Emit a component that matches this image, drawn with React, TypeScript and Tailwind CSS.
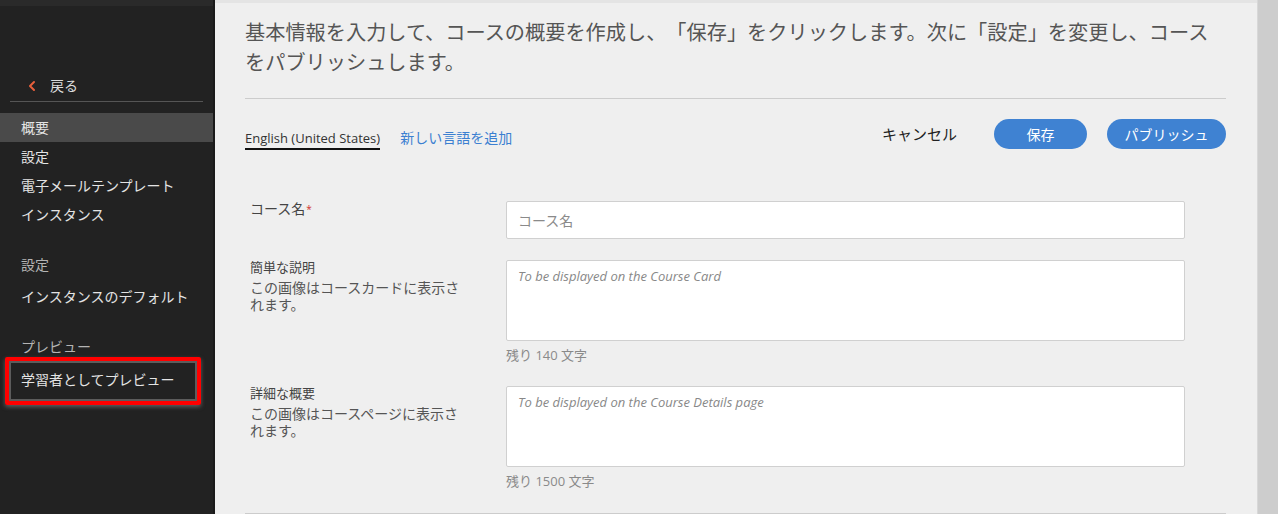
import { ChevronLeft } from "lucide-react"

const font = { fontFamily: "'Open Sans','Noto Sans CJK JP',sans-serif" }

const navItems = ["概要", "設定", "電子メールテンプレート", "インスタンス"]

function Sidebar() {
  return (
    <aside className="w-[215px] shrink-0 bg-[#222222] border-r-2 border-[#1a1a1a] flex flex-col">
      <div className="h-[6px] bg-[#2a2a2a]" />
      <div className="mx-[10px] mt-[66px] flex items-center h-[30px] border-b border-[#555555] pb-[2px]">
        <ChevronLeft className="ml-[14px] h-[16px] w-[16px] text-[#e8603c]" strokeWidth={3} />
        <span className="ml-[10px] text-[14px] text-[#dddddd]">戻る</span>
      </div>
      <div className="mt-[11px] flex flex-col">
        {navItems.map((item, i) => (
          <div
            key={item}
            className={`h-[29px] flex items-center pl-[21px] text-[14px] text-[#e4e4e4] ${i === 0 ? "bg-[#4a4a4a]" : ""}`}
          >
            {item}
          </div>
        ))}
      </div>
      <div className="mt-[21px] h-[29px] flex items-center pl-[21px] text-[14px] text-[#b4b4b4]">設定</div>
      <div className="mt-[3px] h-[29px] flex items-center pl-[21px] text-[14px] text-[#e4e4e4]">インスタンスのデフォルト</div>
      <div className="mt-[21px] h-[29px] flex items-center pl-[21px] text-[14px] text-[#b4b4b4]">プレビュー</div>
      <div className="relative mt-[4px] h-[29px] flex items-center pl-[21px] text-[14px] text-[#e4e4e4]">
        学習者としてプレビュー
        <div className="absolute left-[5px] top-[-8px] w-[196px] h-[48px] border-4 border-[#ff0000] rounded-[2px] shadow-[0_2px_4px_rgba(120,120,120,0.7)]">
          <div className="h-full w-full border-2 border-[#5c5c5c]" />
        </div>
      </div>
    </aside>
  )
}

function Field({
  label,
  required,
  hint,
  placeholder,
  counter,
  multiline,
}: {
  label: string
  required?: boolean
  hint?: string
  placeholder: string
  counter?: string
  multiline?: boolean
}) {
  return (
    <div className="flex">
      <div className="w-[261px] shrink-0 pl-[5px] pr-[41px]">
        {multiline ? (
          <>
            <div className="text-[13px] leading-[18px] text-[#444444] mt-[-2px]">{label}</div>
            <div className="text-[14px] leading-[17px] text-[#555555] mt-[3px]">{hint}</div>
          </>
        ) : (
          <div className="text-[14px] leading-[18px] text-[#444444] mt-[-1px]">
            {label}
            {required && <span className="text-[#d0312d] text-[10px] align-top ml-[1px]">*</span>}
          </div>
        )}
      </div>
      <div className="w-[679px]">
        {multiline ? (
          <div className="h-[81px] bg-white border border-[#d0d0d0] rounded-[2px] px-[11px] pt-[6px] text-[13px] italic text-[#888888]">
            {placeholder}
          </div>
        ) : (
          <div className="h-[38px] bg-white border border-[#d0d0d0] rounded-[2px] px-[11px] flex items-center text-[14px] text-[#8a8a8a]">
            {placeholder}
          </div>
        )}
        {counter && <div className="mt-[6px] text-[13px] leading-[17px] text-[#8a8a8a]">{counter}</div>}
      </div>
    </div>
  )
}

export default function App() {
  return (
    <div className="flex h-[514px] w-[1278px] overflow-hidden [text-spacing-trim:space-all]" style={font}>
      <Sidebar />
      <main className="flex-1 bg-[#efefef] flex flex-col">
        <div className="h-[3px] bg-[#e4e4e4]" />
        <div className="pl-[30px] pr-[31px]">
          <p className="mt-[14px] text-[20.2px] leading-[30px] text-[#555555]">
            基本情報を入力して、コースの概要を作成し、「保存」をクリックします。次に「設定」を変更し、コースをパブリッシュします。
          </p>
          <div className="mt-[21px] border-t border-[#cccccc]" />
          <div className="mt-[20px] flex items-center h-[30px]">
            <div className="h-[30px] flex items-end pb-[2px]">
              <div className="relative text-[13px] leading-[18px] text-[#333333]">
                English (United States)
                <div className="absolute left-0 right-0 bottom-[-3px] h-[2px] bg-[#111111]" />
              </div>
              <span className="ml-[20px] text-[14px] leading-[18px] text-[#3b7fd1]">新しい言語を追加</span>
            </div>
            <span className="ml-auto text-[15px] text-[#222222]">キャンセル</span>
            <button className="ml-[37px] h-[30px] w-[93px] rounded-full bg-[#3f82d2] text-[14px] text-white">保存</button>
            <button className="ml-[20px] h-[30px] w-[119px] rounded-full bg-[#3f82d2] text-[14px] text-white">パブリッシュ</button>
          </div>
          <div className="mt-[52px] flex flex-col">
            <Field label="コース名" required placeholder="コース名" />
            <div className="mt-[21px]">
              <Field
                label="簡単な説明"
                hint="この画像はコースカードに表示されます。"
                placeholder="To be displayed on the Course Card"
                counter="残り 140 文字"
                multiline
              />
            </div>
            <div className="mt-[22px]">
              <Field
                label="詳細な概要"
                hint="この画像はコースページに表示されます。"
                placeholder="To be displayed on the Course Details page"
                counter="残り 1500 文字"
                multiline
              />
            </div>
            <div className="mt-[23px] border-t border-[#cccccc]" />
          </div>
        </div>
      </main>
      <div className="w-[21px] shrink-0 bg-[#cdcdcd] border-l border-[#d8d8d8]" />
    </div>
  )
}
